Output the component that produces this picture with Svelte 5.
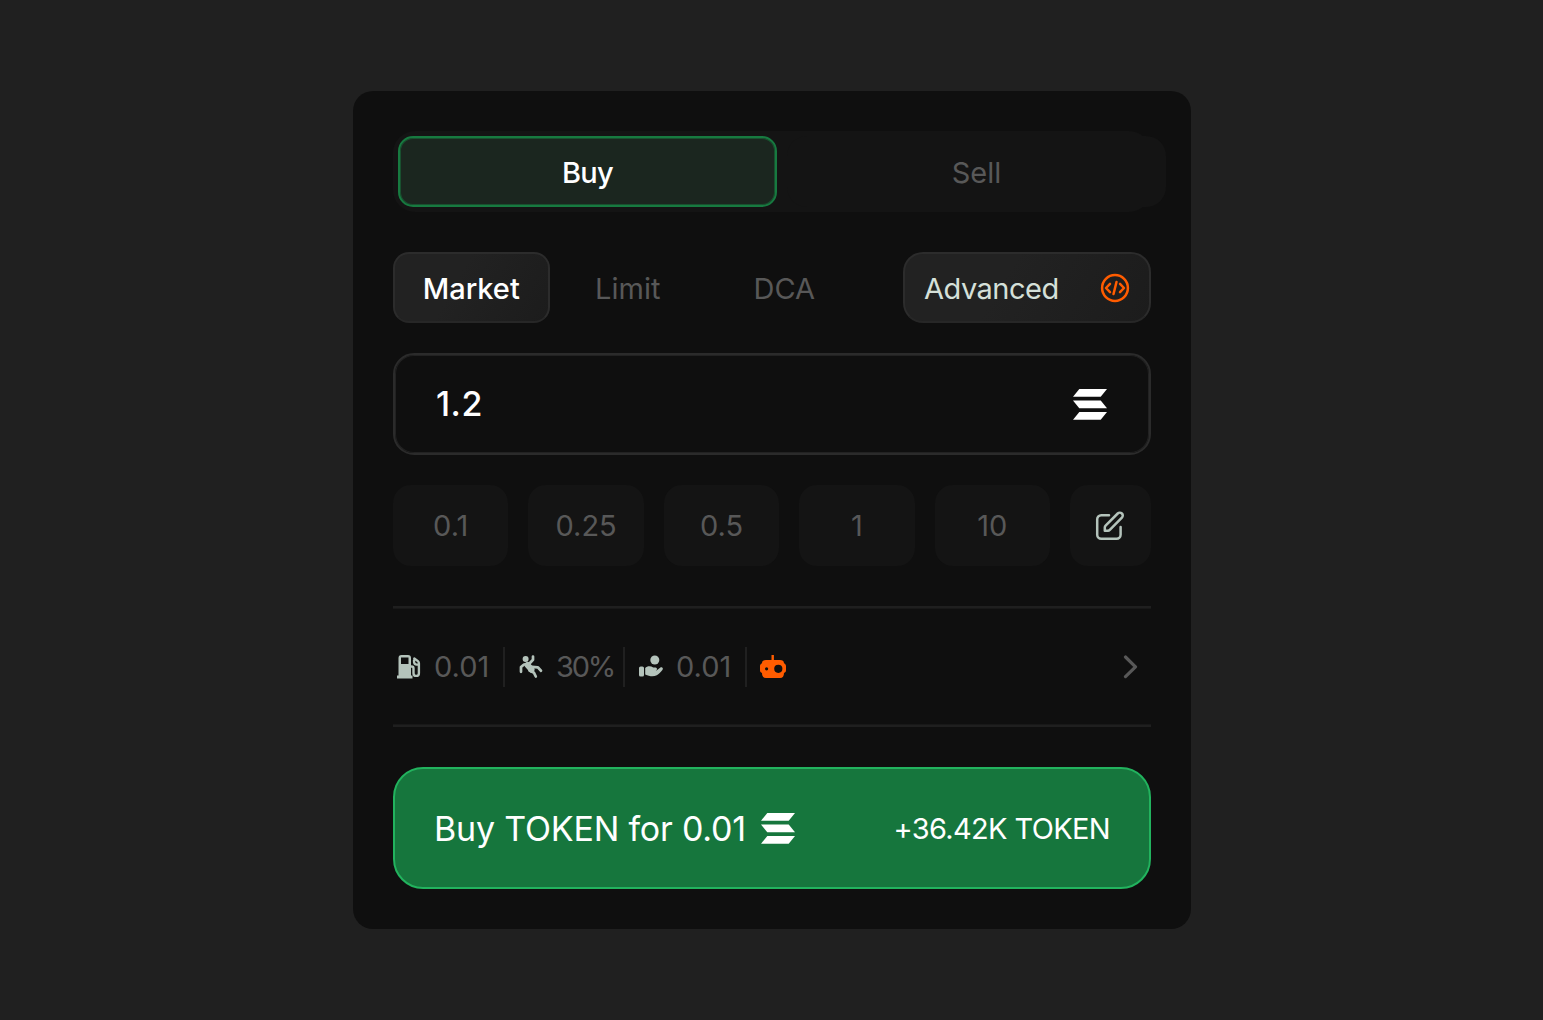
<script lang="ts">
  const orderTypes = [
    { label: 'Market', active: true },
    { label: 'Limit', active: false },
    { label: 'DCA', active: false },
  ];
  const presets = ['0.1', '0.25', '0.5', '1', '10'];

  let side = $state('buy');
  let amount = $state('1.2');
</script>

{#snippet sol()}
  <svg class="sol" viewBox="0 0 34 31" fill="currentColor" aria-hidden="true">
    <path d="M6.3 0H34l-6.3 7.8H0z" />
    <path d="M0 11.5h27.7L34 19.2H6.3z" />
    <path d="M6.3 23H34l-6.3 7.8H0z" />
  </svg>
{/snippet}

<main>
  <section class="card">
    <div class="sides">
      <button class="side" class:on={side === 'buy'} onclick={() => (side = 'buy')}>Buy</button>
      <button class="side" class:on={side === 'sell'} onclick={() => (side = 'sell')}>Sell</button>
    </div>

    <div class="types">
      {#each orderTypes as t}
        <button class="type" class:active={t.active}>{t.label}</button>
      {/each}
      <button class="advanced">
        <span>Advanced</span>
        <svg width="30" height="30" viewBox="0 0 30 30" fill="none" stroke="currentColor" stroke-width="2.5" stroke-linecap="round" stroke-linejoin="round">
          <circle cx="15" cy="15" r="12.9" />
          <path d="M10 10.900 6 15l4 4.100M20 10.900 24 15l-4 4.100M16.500 9l-3 12" stroke-width="2.500" />
        </svg>
      </button>
    </div>

    <label class="amount">
      <span>{amount}</span>
      {@render sol()}
    </label>

    <div class="presets">
      {#each presets as p}
        <button class="preset" onclick={() => (amount = p)}>{p}</button>
      {/each}
      <button class="edit" aria-label="Edit presets">
        <svg width="30" height="30" viewBox="0 0 30 30" fill="none" stroke="currentColor" stroke-width="2.5" stroke-linecap="round" stroke-linejoin="round">
          <path d="M14 4.3H6.2a4 4 0 0 0-4 4v15.500a4 4 0 0 0 4 4h15.400a4 4 0 0 0 4-4V16" />
          <path d="M9.8 19.8v-3.4c0-.7.3-1.3.8-1.8L22.7 2.5a2.9 2.9 0 0 1 4.2 4.2L14.8 18.9c-.5.5-1.1.8-1.8.8z" />
        </svg>
      </button>
    </div>

    <div class="settings">
      <div class="setting gas">
        <svg width="24" height="24" viewBox="0 0 24 24" fill="currentColor">
          <path fill-rule="evenodd" d="M1.500 20.500V3a3 3 0 0 1 3-3H11a3 3 0 0 1 3 3v17.500h1.500v3H0v-3zM4 2.500V9h7.500V2.500z" />
          <path d="M14.500 11.500c1.400 0 2 .6 2 2v4.700a2.700 2.700 0 0 0 5.400 0V8.300c0-.9-.3-1.600-1-2.200L17.300 3.500M21 9.500c-3 .6-4.200-1-4-4" fill="none" stroke="currentColor" stroke-width="2.400" stroke-linecap="round" />
        </svg>
        <span>0.01</span>
      </div>
      <div class="setting slip">
        <svg width="24" height="24" viewBox="0 0 24 24" fill="none" stroke="currentColor" stroke-width="2.700" stroke-linecap="round" stroke-linejoin="round">
          <circle cx="6.600" cy="4" r="3" fill="currentColor" stroke="none" />
          <path d="M14 1.500v3.300L10.500 8.500 5 9.500 2 12v4.800" />
          <path d="m8.500 10 4 4.500" stroke-width="6" />
          <path d="m13 11.800 5.800.5 3.200 3.400M10.500 15.500l4.500 2.300 1.800 3.700" />
        </svg>
        <span>30%</span>
      </div>
      <div class="setting tip">
        <svg width="24" height="24" viewBox="0 0 24 24" fill="currentColor">
          <circle cx="15.800" cy="5" r="4.500" />
          <rect x="0" y="11.500" width="5" height="10" rx="1.600" />
          <path d="M6.200 13c1.800-2 5.500-2.200 8-.5h2.300c1.900 0 2 2.800.2 3h-3 3.800l3.600-2.800c1.800-1.200 3.600.5 2.300 2.200-1.600 2-3.600 4.200-5.600 5.300-3 1.700-7 1.500-11.600-.7z" />
        </svg>
        <span>0.01</span>
      </div>
      <div class="setting bot">
        <svg width="26" height="24" viewBox="0 0 26 24">
          <path fill="currentColor" fill-rule="evenodd" d="M11.500 0h2.400v5H20c2.500 0 4 1.200 4 3.200 1.300.6 2 1.700 2 3v4c0 1.300-.7 2.300-2 2.800 0 3-1.300 5-4 5H6c-2.700 0-4-2-4-5-1.300-.5-2-1.500-2-2.800v-4c0-1.300.7-2.400 2-3C2 6.200 3.500 5 6 5h5.500zM18.300 9.700a4.100 4.100 0 1 0 0 8.200 4.100 4.100 0 0 0 0-8.200zM6.600 12.200a1.600 1.600 0 1 0 0 3.200 1.600 1.600 0 0 0 0-3.200z" />
        </svg>
      </div>
      <svg class="chevron" width="16" height="24" viewBox="0 0 16 24" fill="none" stroke="currentColor" stroke-width="3.200" stroke-linecap="round" stroke-linejoin="round">
        <path d="m2.500 2 10 9.800-10 9.800" />
      </svg>
    </div>

    <button class="submit">
      <span class="main">Buy TOKEN for 0.01</span>
      {@render sol()}
      <span class="receive">+36.42K TOKEN</span>
    </button>
  </section>
</main>

<style>
  :global(body) { margin: 0; background: #202020; }

  main {
    height: 1020px;
    box-sizing: border-box;
    padding: 91px 352px 0 353px;
    background: #202020;
    font-family: Inter, "Liberation Sans", sans-serif;
    font-size: 29px;
    color: #fff;
  }

  .card {
    box-sizing: border-box;
    height: 838px;
    padding: 40px;
    border-radius: 20px;
    background: #0f0f0f;
    display: flex;
    flex-direction: column;
  }

  button {
    box-sizing: border-box;
    margin: 0;
    padding: 0;
    border: 0;
    background: none;
    font: inherit;
    color: #585858;
    display: flex;
    align-items: center;
    justify-content: center;
    white-space: nowrap;
  }
  svg { flex: none; display: block; }
  .sol { width: 34px; height: 31px; }

  /* Buy / Sell. The pair is a little wider than its track. */
  .sides {
    box-sizing: border-box;
    width: 758px;
    height: 81px;
    padding: 5px;
    border-radius: 22px;
    background: #141414;
    display: flex;
    gap: 10px;
  }
  .side {
    flex: 0 0 379px;
    height: 71px;
    padding-top: 2px;
    border-radius: 20px;
    background: #141414;
  }
  .side.on {
    border: 2px solid #177a40;
    border-radius: 15px;
    box-shadow: inset 0 0 0 1px #19502f;
    background: #1b261f;
    color: #fff;
    font-weight: 500;
    letter-spacing: -0.7px;
  }

  .types {
    display: flex;
    height: 71px;
    margin-top: 40px;
  }
  .type { width: 156.5px; padding-top: 2px; }
  .type.active, .advanced {
    border: 2px solid #2c2c2c;
    border-bottom-color: #272727;
    border-radius: 16px;
    background: linear-gradient(120deg, #222 40%, #1c1c1c);
    color: #fff;
  }
  .type.active { font-weight: 500; }
  .advanced {
    width: 248px;
    margin-left: auto;
    padding: 0 19px;
    justify-content: space-between;
    border-radius: 20px;
    color: #d5e0d9;
    letter-spacing: -0.5px;
  }
  .advanced span { padding-top: 2px; }
  .advanced svg { color: #ff5c00; }

  .amount {
    box-sizing: border-box;
    height: 102px;
    margin-top: 30px;
    padding: 0 42px 0 41px;
    border: 2px solid #2b2b2b;
    border-radius: 21px;
    box-shadow: inset 0 0 0 1px #222;
    display: flex;
    align-items: center;
    justify-content: space-between;
    font-size: 34px;
    font-weight: 500;
    letter-spacing: 0.5px;
  }
  .amount span { padding-bottom: 1px; }

  .presets {
    display: flex;
    gap: 20px;
    height: 81px;
    margin-top: 30px;
  }
  .preset, .edit { border-radius: 18px; background: #141414; }
  .preset { flex: 1; }
  .edit { width: 81px; padding-right: 2px; color: #b4c3bb; }

  .settings {
    box-sizing: border-box;
    height: 121px;
    margin-top: 40px;
    border: solid #1f1f1f;
    border-width: 2px 0;
    box-shadow: inset 0 1px #181818, inset 0 -1px #181818;
    display: flex;
    align-items: center;
    color: #585858;
  }
  .setting {
    box-sizing: border-box;
    height: 40px;
    display: flex;
    align-items: center;
    gap: 13px;
  }
  .setting svg { color: #b4c3bb; }
  .gas, .slip, .tip { border-right: 2px solid #202020; }
  .gas { width: 112px; padding-left: 4px; }
  .slip { width: 120px; padding-left: 14px; }
  .slip span { letter-spacing: -2.2px; }
  .tip { width: 122px; padding-left: 14px; }
  .setting.bot { padding-left: 13px; }
  .setting.bot svg { color: #ff5c00; }
  .chevron { margin-left: auto; margin-right: 12px; }

  .submit {
    height: 122px;
    margin-top: 40px;
    padding: 0 39px;
    border: 2px solid #22b35e;
    border-radius: 30px;
    background: #16763d;
    color: #fff;
    justify-content: flex-start;
  }
  .main {
    width: 327px;
    font-size: 34px;
    letter-spacing: -0.2px;
    text-align: left;
  }
  .receive {
    margin-left: auto;
    letter-spacing: -0.65px;
  }
</style>
